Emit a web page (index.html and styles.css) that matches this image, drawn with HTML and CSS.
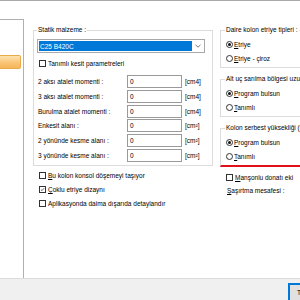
FILE: index.html
```html
<!DOCTYPE html>
<html lang="tr">
<head>
<meta charset="utf-8">
<link rel="stylesheet" href="styles.css">
</head>
<body>
<div class="dialog">
  <div class="main">
    <aside class="sidebar"><div class="nav-item"></div></aside>
    <div class="content">
      <div class="col-left">
        <fieldset class="group">
          <legend>Statik malzeme :</legend>
          <div class="combo">
            <span class="combo-value">C25 B420C</span>
            <span class="combo-arrow"><svg width="6" height="4" viewBox="0 0 6 4"><path d="M0.5 0.8 L3 3.2 L5.5 0.8" fill="none" stroke="#6d6d6d" stroke-width="0.9"/></svg></span>
          </div>
          <div class="check-row"><span class="box"></span><span>Tanımlı kesit parametreleri</span></div>
          <div class="fields">
            <div class="field"><span class="field-label">2 aksı atalet momenti :</span><span class="input">0</span><span class="unit">[cm4]</span></div>
            <div class="field"><span class="field-label">3 aksı atalet momenti :</span><span class="input">0</span><span class="unit">[cm4]</span></div>
            <div class="field"><span class="field-label">Burulma atalet momenti :</span><span class="input">0</span><span class="unit">[cm4]</span></div>
            <div class="field"><span class="field-label">Enkesit alanı :</span><span class="input">0</span><span class="unit">[cm²]</span></div>
            <div class="field"><span class="field-label">2 yönünde kesme alanı :</span><span class="input">0</span><span class="unit">[cm²]</span></div>
            <div class="field"><span class="field-label">3 yönünde kesme alanı :</span><span class="input">0</span><span class="unit">[cm²]</span></div>
          </div>
        </fieldset>
        <div class="checks">
          <div class="check-row"><span class="box"></span><span><u>B</u>u kolon konsol döşemeyi taşıyor</span></div>
          <div class="check-row"><span class="box checked"><svg width="7" height="7" viewBox="0 0 7 7"><path d="M1.2 3.6 L2.8 5.2 L5.8 1.6" fill="none" stroke="#222" stroke-width="0.9"/></svg></span><span><u>Ç</u>oklu etriye dizaynı</span></div>
          <div class="check-row"><span class="box"></span><span>Aplikasyonda daima dışarıda detaylandır</span></div>
        </div>
      </div>
      <div class="col-right">
        <fieldset class="group rgroup">
          <legend>Daire kolon etriye tipleri :</legend>
          <div class="radio-row"><span class="radio on"></span><span><u>E</u>triye</span></div>
          <div class="radio-row"><span class="radio"></span><span><u>E</u>triye - çiroz</span></div>
        </fieldset>
        <fieldset class="group rgroup">
          <legend>Alt uç sarılma bölgesi uzunluğu</legend>
          <div class="radio-row"><span class="radio on"></span><span><u>P</u>rogram bulsun</span></div>
          <div class="radio-row"><span class="radio"></span><span><u>T</u>anımlı</span></div>
        </fieldset>
        <fieldset class="group rgroup marked">
          <legend>Kolon serbest yüksekliği (h)</legend>
          <div class="radio-row"><span class="radio on"></span><span><u>P</u>rogram bulsun</span></div>
          <div class="radio-row"><span class="radio"></span><span><u>T</u>anımlı</span></div>
        </fieldset>
        <div class="check-row rcheck"><span class="box"></span><span><u>M</u>anşonlu donatı eki</span></div>
        <div class="text-row"><u>Ş</u>aşırtma mesafesi :</div>
      </div>
    </div>
  </div>
  <div class="footer"><div class="btn">Tamam</div></div>
</div>
</body>
</html>
```
FILE: styles.css
```css
* { box-sizing: border-box; }
html, body { margin: 0; padding: 0; }
body {
  width: 300px;
  height: 300px;
  overflow: hidden;
  background: #fff;
  font-family: "Liberation Sans", Arial, sans-serif;
  font-size: 6.5px;
  color: #000;
}
u { text-decoration-thickness: 0.6px; text-underline-offset: 1px; }
.dialog {
  display: flex;
  flex-direction: column;
  height: 300px;
  border-top: 1px solid #a8a8a8;
}
.main { flex: 1; display: flex; min-height: 0; }
.sidebar {
  width: 24px;
  flex-shrink: 0;
  margin-top: 18px;
  border-top: 1px solid #b0b0b0;
  border-right: 1px solid #b0b0b0;
  padding-top: 35px;
}
.nav-item {
  width: 21px;
  height: 14px;
  border: 1px solid #eaa94a;
  border-left: none;
  border-radius: 0 2px 2px 0;
  background: linear-gradient(#fde3b0, #f9c476 55%, #f6b65a);
}
.content {
  flex: 1;
  display: flex;
  gap: 7px;
  padding: 25px 0 0 9px;
  min-width: 0;
}
.col-left { width: 180px; flex-shrink: 0; }
.col-right { width: 110px; flex-shrink: 0; }
.group {
  margin: 0;
  padding: 0 6px 3px 3px;
  border: 1px solid #dcdcdc;
  min-width: 0;
}
.group legend {
  padding: 0 1px;
  line-height: 8px;
  white-space: nowrap;
}
.combo {
  margin-top: 5px;
  width: 168px;
  height: 14px;
  border: 1px solid #a9a9a9;
  padding: 1px;
  display: flex;
}
.combo-value {
  flex: 1;
  background: #0078d7;
  color: #fff;
  padding-left: 1px;
  line-height: 11px;
}
.combo-arrow {
  width: 11px;
  display: flex;
  align-items: center;
  justify-content: center;
}
.check-row {
  display: flex;
  align-items: center;
  height: 14px;
  white-space: nowrap;
}
.group > .check-row { margin-top: 3px; padding-left: 2px; }
.box {
  width: 7px;
  height: 7px;
  border: 1px solid #333;
  margin-right: 2px;
  flex-shrink: 0;
  display: flex;
  align-items: center;
  justify-content: center;
}
.box svg { display: block; }
.fields {
  margin-top: 5px;
  display: flex;
  flex-direction: column;
  gap: 1.8px;
}
.field {
  display: flex;
  align-items: center;
  height: 13px;
  padding-left: 1px;
  white-space: nowrap;
}
.field-label { width: 89px; }
.input {
  width: 55px;
  height: 13px;
  border: 1px solid #9a9a9a;
  padding-left: 2px;
  line-height: 11px;
}
.unit { margin-left: 3px; }
.checks { margin-top: 3px; padding-left: 6px; }
.rgroup { padding: 0 0 2px 4px; }
.rgroup + .rgroup { margin-top: 7px; }
.rgroup legend { padding: 0 1px; }
.rgroup legend { margin-left: 0; }
.rgroup .radio-row:first-of-type { margin-top: 3px; }
.radio-row {
  display: flex;
  align-items: center;
  height: 14px;
  padding-left: 1px;
  white-space: nowrap;
}
.radio {
  width: 7px;
  height: 7px;
  border: 1px solid #333;
  border-radius: 50%;
  margin-right: 1px;
  flex-shrink: 0;
  display: flex;
  align-items: center;
  justify-content: center;
}
.radio.on::after {
  content: "";
  width: 3px;
  height: 3px;
  border-radius: 50%;
  background: #111;
}
.marked { border-bottom: 2px solid #e3101c; }
.rcheck { margin-top: 3px; padding-left: 6px; }
.text-row { height: 14px; line-height: 14px; padding-left: 7px; white-space: nowrap; }
.footer {
  height: 22px;
  flex-shrink: 0;
  background: #f0f0f0;
  border-top: 1px solid #dcdcdc;
  padding: 4px 0 0 288px;
  overflow: hidden;
  display: flex;
}
.btn {
  width: 70px;
  height: 20px;
  flex-shrink: 0;
  border: 1px solid #0078d7;
  box-shadow: inset 0 0 0 1px #0078d7;
  background: #e1e1e1;
  padding-left: 8px;
  line-height: 18px;
}
```
